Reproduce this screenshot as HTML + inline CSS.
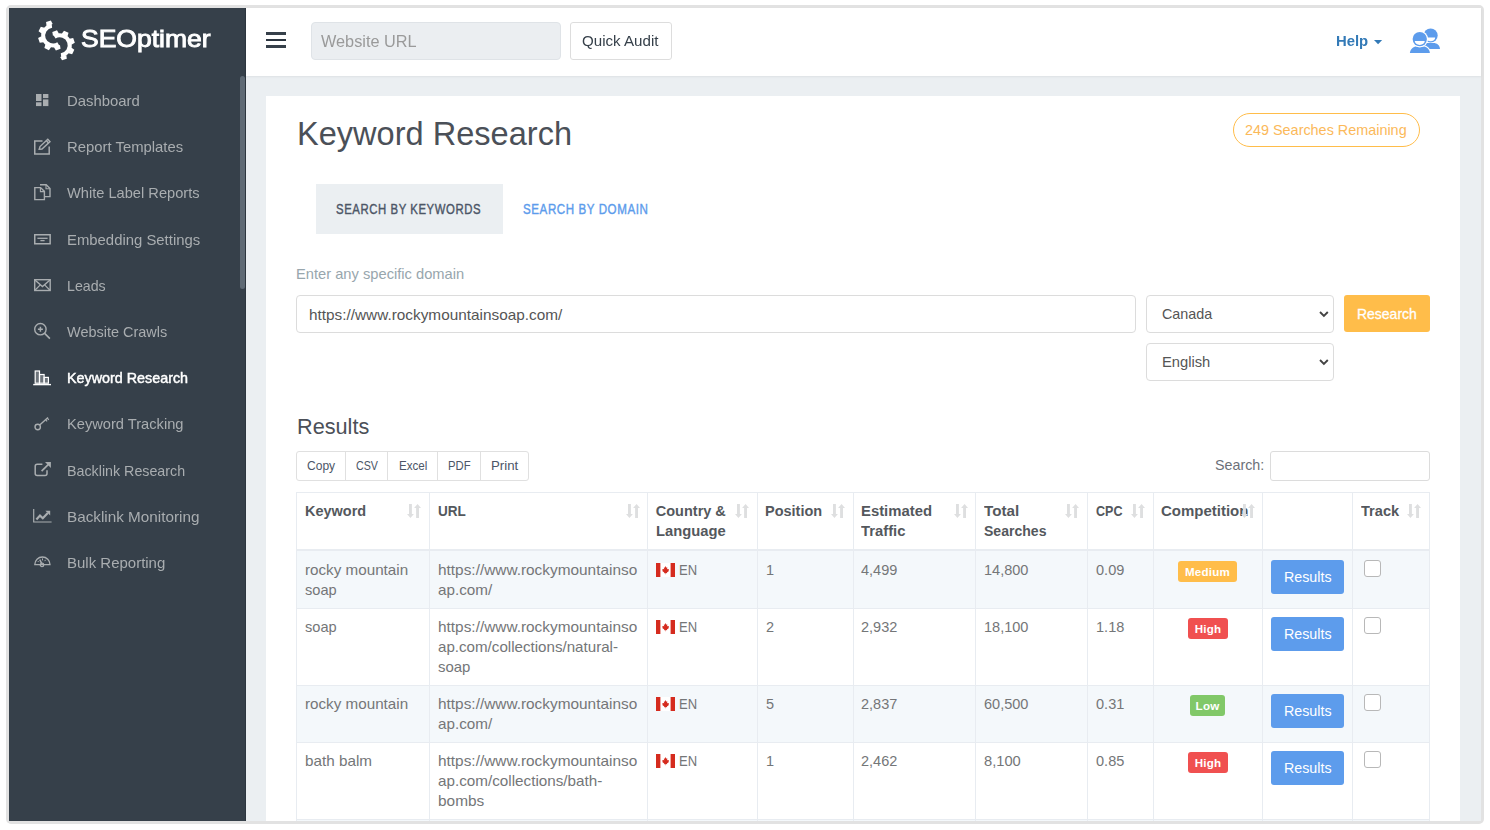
<!DOCTYPE html>
<html lang="en"><head><meta charset="utf-8"><title>Keyword Research - SEOptimer</title>
<style>
html,body{margin:0;padding:0;}
body{width:1490px;height:830px;background:#fff;position:relative;overflow:hidden;font-family:"Liberation Sans", sans-serif;}
#app{position:absolute;left:0;top:0;width:1490px;height:830px;}
#fixed{position:absolute;left:0;top:0;width:1490px;height:830px;will-change:transform;}
.b{position:absolute;box-sizing:border-box;}
.t{position:absolute;white-space:nowrap;transform-origin:0 50%;}
svg{position:absolute;overflow:visible;}
</style></head>
<body>
<div id="app">
<div class="b " style="left:6px;top:5px;width:1478px;height:819px;border:3px solid #e2e2e2;border-radius:5px;"></div>
<div class="b " style="left:9px;top:8px;width:237px;height:813px;background:#36404a;"></div>
<div class="b " style="left:245px;top:8px;width:1px;height:813px;background:#2d363f;"></div>
<div class="b " style="left:240px;top:76px;width:5px;height:213px;background:#5f6a75;border-radius:3px;"></div>
<div class="b " style="left:246px;top:76px;width:1235px;height:745px;background:#ebeff2;"></div>
<div class="b " style="left:246px;top:8px;width:1235px;height:68px;background:#fff;box-shadow:0 1px 2px rgba(0,0,0,0.06);"></div>
<div class="b " style="left:266px;top:96px;width:1194px;height:725px;background:#fff;"></div>
<div class="t " style="left:297.07px;top:113.02px;font-size:34px;line-height:40px;color:#4b5058;font-weight:normal;letter-spacing:0px;transform:scaleX(0.9575);">Keyword Research</div>
<div class="b " style="left:1233px;top:113px;width:187px;height:34px;border:1px solid #ffbd4a;border-radius:17px;"></div>
<div class="t " style="left:1245.28px;top:119.98px;font-size:14.5px;line-height:20px;color:#fbb95a;font-weight:normal;letter-spacing:0px;transform:scaleX(0.9927);">249 Searches Remaining</div>
<div class="b " style="left:316px;top:184px;width:187px;height:50px;background:#ebeff2;"></div>
<div class="t " style="left:335.93px;top:200.02px;font-size:13.8px;line-height:20px;color:#4c5667;font-weight:normal;letter-spacing:0.7px;-webkit-text-stroke:0.4px #4c5667;transform:scaleX(0.8227);">SEARCH BY KEYWORDS</div>
<div class="t " style="left:522.82px;top:200.02px;font-size:13.8px;line-height:20px;color:#5d9cec;font-weight:normal;letter-spacing:0.7px;-webkit-text-stroke:0.4px #5d9cec;transform:scaleX(0.8379);">SEARCH BY DOMAIN</div>
<div class="t " style="left:296.27px;top:263.78px;font-size:14.5px;line-height:20px;color:#98a6ad;font-weight:normal;letter-spacing:0px;transform:scaleX(1.0129);">Enter any specific domain</div>
<div class="b " style="left:296px;top:295px;width:840px;height:38px;border:1px solid #dcdcdc;border-radius:4px;background:#fff;"></div>
<div class="t " style="left:308.53px;top:305.38px;font-size:14.5px;line-height:20px;color:#555;font-weight:normal;letter-spacing:0px;transform:scaleX(1.058);">https://www.rockymountainsoap.com/</div>
<div class="b " style="left:1146px;top:295px;width:188px;height:38px;border:1px solid #dcdcdc;border-radius:4px;background:#fff;"></div>
<div class="t " style="left:1162.48px;top:304.38px;font-size:14.5px;line-height:20px;color:#555;font-weight:normal;letter-spacing:0px;transform:scaleX(0.9889);">Canada</div>
<svg style="left:1318.8px;top:311.2px" width="10" height="7" viewBox="0 0 10 7"><path d="M1 1L4.9 4.9L8.8 1" fill="none" stroke="#444" stroke-width="1.9"/></svg>
<div class="b " style="left:1146px;top:343px;width:188px;height:38px;border:1px solid #dcdcdc;border-radius:4px;background:#fff;"></div>
<div class="t " style="left:1162.46px;top:352.38px;font-size:14.5px;line-height:20px;color:#555;font-weight:normal;letter-spacing:0px;transform:scaleX(1.0149);">English</div>
<svg style="left:1318.8px;top:359.2px" width="10" height="7" viewBox="0 0 10 7"><path d="M1 1L4.9 4.9L8.8 1" fill="none" stroke="#444" stroke-width="1.9"/></svg>
<div class="b " style="left:1344px;top:295px;width:86px;height:37px;background:#ffbd4a;border-radius:3px;"></div>
<div class="t " style="left:1357.10px;top:304.38px;font-size:14.5px;line-height:20px;color:#fff;font-weight:normal;letter-spacing:0px;-webkit-text-stroke:0.3px #fff;transform:scaleX(0.9635);">Research</div>
<div class="t " style="left:296.72px;top:411.50px;font-size:22.5px;line-height:30px;color:#4b5058;font-weight:normal;letter-spacing:0px;transform:scaleX(0.9632);">Results</div>
<div class="b " style="left:296px;top:451px;width:233px;height:30px;border:1px solid #e0e0e0;border-radius:3px;background:#fff;"></div>
<div class="b " style="left:345px;top:452px;width:1px;height:28px;background:#e0e0e0;"></div>
<div class="b " style="left:387px;top:452px;width:1px;height:28px;background:#e0e0e0;"></div>
<div class="b " style="left:437px;top:452px;width:1px;height:28px;background:#e0e0e0;"></div>
<div class="b " style="left:480px;top:452px;width:1px;height:28px;background:#e0e0e0;"></div>
<div class="t " style="left:306.90px;top:455.86px;font-size:12.8px;line-height:20px;color:#4c5667;font-weight:normal;letter-spacing:0px;transform:scaleX(0.9407);">Copy</div>
<div class="t " style="left:355.97px;top:455.86px;font-size:12.8px;line-height:20px;color:#4c5667;font-weight:normal;letter-spacing:0px;transform:scaleX(0.8349);">CSV</div>
<div class="t " style="left:398.52px;top:455.86px;font-size:12.8px;line-height:20px;color:#4c5667;font-weight:normal;letter-spacing:0px;transform:scaleX(0.9062);">Excel</div>
<div class="t " style="left:447.93px;top:455.86px;font-size:12.8px;line-height:20px;color:#4c5667;font-weight:normal;letter-spacing:0px;transform:scaleX(0.8837);">PDF</div>
<div class="t " style="left:491.04px;top:455.86px;font-size:12.8px;line-height:20px;color:#4c5667;font-weight:normal;letter-spacing:0px;transform:scaleX(1.0347);">Print</div>
<div class="t " style="left:1215.19px;top:455.18px;font-size:14.5px;line-height:20px;color:#6c7179;font-weight:normal;letter-spacing:0px;transform:scaleX(0.9849);">Search:</div>
<div class="b " style="left:1270px;top:451px;width:160px;height:30px;border:1px solid #dcdcdc;border-radius:3px;background:#fff;"></div>
<div class="b " style="left:296px;top:551px;width:1134px;height:57px;background:#f4f8fb;"></div>
<div class="b " style="left:296px;top:685px;width:1134px;height:57px;background:#f4f8fb;"></div>
<div class="b " style="left:296px;top:820px;width:1134px;height:1px;background:#f4f8fb;"></div>
<div class="b " style="left:296px;top:492px;width:1134px;height:1px;background:#e8ecf1;"></div>
<div class="b " style="left:296px;top:608px;width:1134px;height:1px;background:#e8ecf1;"></div>
<div class="b " style="left:296px;top:685px;width:1134px;height:1px;background:#e8ecf1;"></div>
<div class="b " style="left:296px;top:742px;width:1134px;height:1px;background:#e8ecf1;"></div>
<div class="b " style="left:296px;top:819px;width:1134px;height:1px;background:#e8ecf1;"></div>
<div class="b " style="left:296px;top:549px;width:1134px;height:2px;background:#e8ecf1;"></div>
<div class="b " style="left:296px;top:492px;width:1px;height:329px;background:#e8ecf1;"></div>
<div class="b " style="left:429px;top:492px;width:1px;height:329px;background:#e8ecf1;"></div>
<div class="b " style="left:647px;top:492px;width:1px;height:329px;background:#e8ecf1;"></div>
<div class="b " style="left:757px;top:492px;width:1px;height:329px;background:#e8ecf1;"></div>
<div class="b " style="left:853px;top:492px;width:1px;height:329px;background:#e8ecf1;"></div>
<div class="b " style="left:975px;top:492px;width:1px;height:329px;background:#e8ecf1;"></div>
<div class="b " style="left:1087px;top:492px;width:1px;height:329px;background:#e8ecf1;"></div>
<div class="b " style="left:1153px;top:492px;width:1px;height:329px;background:#e8ecf1;"></div>
<div class="b " style="left:1262px;top:492px;width:1px;height:329px;background:#e8ecf1;"></div>
<div class="b " style="left:1352px;top:492px;width:1px;height:329px;background:#e8ecf1;"></div>
<div class="b " style="left:1429px;top:492px;width:1px;height:329px;background:#e8ecf1;"></div>
<div class="t th" style="left:304.78px;top:501.18px;font-size:14.5px;line-height:20px;color:#54585d;font-weight:bold;letter-spacing:0px;transform:scaleX(0.9983);">Keyword</div>
<div class="t th" style="left:437.72px;top:501.18px;font-size:14.5px;line-height:20px;color:#54585d;font-weight:bold;letter-spacing:0px;transform:scaleX(0.9343);">URL</div>
<div class="t th" style="left:655.77px;top:501.18px;font-size:14.5px;line-height:20px;color:#54585d;font-weight:bold;letter-spacing:0px;">Country &amp;</div>
<div class="t th" style="left:655.76px;top:521.28px;font-size:14.5px;line-height:20px;color:#54585d;font-weight:bold;letter-spacing:0px;transform:scaleX(1.0174);">Language</div>
<div class="t th" style="left:765.48px;top:501.18px;font-size:14.5px;line-height:20px;color:#54585d;font-weight:bold;letter-spacing:0px;transform:scaleX(0.999);">Position</div>
<div class="t th" style="left:861.06px;top:501.18px;font-size:14.5px;line-height:20px;color:#54585d;font-weight:bold;letter-spacing:0px;transform:scaleX(1.0241);">Estimated</div>
<div class="t th" style="left:861.06px;top:521.28px;font-size:14.5px;line-height:20px;color:#54585d;font-weight:bold;letter-spacing:0px;transform:scaleX(1.0222);">Traffic</div>
<div class="t th" style="left:983.84px;top:501.18px;font-size:14.5px;line-height:20px;color:#54585d;font-weight:bold;letter-spacing:0px;transform:scaleX(1.0463);">Total</div>
<div class="t th" style="left:983.90px;top:521.28px;font-size:14.5px;line-height:20px;color:#54585d;font-weight:bold;letter-spacing:0px;transform:scaleX(0.9691);">Searches</div>
<div class="t th" style="left:1095.77px;top:501.18px;font-size:14.5px;line-height:20px;color:#54585d;font-weight:bold;letter-spacing:0px;transform:scaleX(0.8638);">CPC</div>
<div class="t th" style="left:1161.35px;top:501.18px;font-size:14.5px;line-height:20px;color:#54585d;font-weight:bold;letter-spacing:0px;transform:scaleX(1.0333);">Competition</div>
<div class="t th" style="left:1361.17px;top:501.18px;font-size:14.5px;line-height:20px;color:#54585d;font-weight:bold;letter-spacing:0px;transform:scaleX(1.0067);">Track</div>
<svg style="left:407.3px;top:504px" width="14" height="14" viewBox="0 0 14 14"><g fill="#dedfe0"><path d="M2 0H4.9V10.1H6.9L3.45 14L0 10.1H2Z"/><path d="M9.1 14H12V3.9H14L10.55 0L7.1 3.9H9.1Z"/></g></svg>
<svg style="left:625.5px;top:504px" width="14" height="14" viewBox="0 0 14 14"><g fill="#dedfe0"><path d="M2 0H4.9V10.1H6.9L3.45 14L0 10.1H2Z"/><path d="M9.1 14H12V3.9H14L10.55 0L7.1 3.9H9.1Z"/></g></svg>
<svg style="left:735.3px;top:504px" width="14" height="14" viewBox="0 0 14 14"><g fill="#dedfe0"><path d="M2 0H4.9V10.1H6.9L3.45 14L0 10.1H2Z"/><path d="M9.1 14H12V3.9H14L10.55 0L7.1 3.9H9.1Z"/></g></svg>
<svg style="left:831.3px;top:504px" width="14" height="14" viewBox="0 0 14 14"><g fill="#dedfe0"><path d="M2 0H4.9V10.1H6.9L3.45 14L0 10.1H2Z"/><path d="M9.1 14H12V3.9H14L10.55 0L7.1 3.9H9.1Z"/></g></svg>
<svg style="left:953.5px;top:504px" width="14" height="14" viewBox="0 0 14 14"><g fill="#dedfe0"><path d="M2 0H4.9V10.1H6.9L3.45 14L0 10.1H2Z"/><path d="M9.1 14H12V3.9H14L10.55 0L7.1 3.9H9.1Z"/></g></svg>
<svg style="left:1065.3px;top:504px" width="14" height="14" viewBox="0 0 14 14"><g fill="#dedfe0"><path d="M2 0H4.9V10.1H6.9L3.45 14L0 10.1H2Z"/><path d="M9.1 14H12V3.9H14L10.55 0L7.1 3.9H9.1Z"/></g></svg>
<svg style="left:1131.3px;top:504px" width="14" height="14" viewBox="0 0 14 14"><g fill="#dedfe0"><path d="M2 0H4.9V10.1H6.9L3.45 14L0 10.1H2Z"/><path d="M9.1 14H12V3.9H14L10.55 0L7.1 3.9H9.1Z"/></g></svg>
<svg style="left:1241px;top:504px" width="14" height="14" viewBox="0 0 14 14"><g fill="#dedfe0"><path d="M2 0H4.9V10.1H6.9L3.45 14L0 10.1H2Z"/><path d="M9.1 14H12V3.9H14L10.55 0L7.1 3.9H9.1Z"/></g></svg>
<svg style="left:1407.3px;top:504px" width="14" height="14" viewBox="0 0 14 14"><g fill="#dedfe0"><path d="M2 0H4.9V10.1H6.9L3.45 14L0 10.1H2Z"/><path d="M9.1 14H12V3.9H14L10.55 0L7.1 3.9H9.1Z"/></g></svg>
<div class="t td" style="left:304.74px;top:559.58px;font-size:14.5px;line-height:20px;color:#747678;font-weight:normal;letter-spacing:0px;transform:scaleX(1.0487);">rocky mountain</div>
<div class="t td" style="left:304.77px;top:579.68px;font-size:14.5px;line-height:20px;color:#747678;font-weight:normal;letter-spacing:0px;transform:scaleX(1.0066);">soap</div>
<div class="t td" style="left:437.63px;top:559.58px;font-size:14.5px;line-height:20px;color:#747678;font-weight:normal;letter-spacing:0px;transform:scaleX(1.061);">https://www.rockymountainso</div>
<div class="t td" style="left:437.64px;top:579.68px;font-size:14.5px;line-height:20px;color:#747678;font-weight:normal;letter-spacing:0px;transform:scaleX(1.051);">ap.com/</div>
<svg style="left:656px;top:563px" width="19" height="14" viewBox="0 0 19 14"><rect width="19" height="14" fill="#fff"/><rect width="4.4" height="14" fill="#d52b1e"/><rect x="14.6" width="4.4" height="14" fill="#d52b1e"/><path transform="translate(9.6 7.0) scale(0.78 0.8) translate(-9.6 -7.3)" d="M9.6 2.4L10.6 4.4L11.8 3.9L11.4 6.6L12.6 5.6L12.9 6.5L14 6.3L13.4 8.2L13.9 8.6L11.3 10.4L11.6 11.3L9.9 11.1V12.6H9.3V11.1L7.6 11.3L7.9 10.4L5.3 8.6L5.8 8.2L5.2 6.3L6.3 6.5L6.6 5.6L7.8 6.6L7.4 3.9L8.6 4.4Z" fill="#d52b1e"/></svg>
<div class="t td" style="left:678.65px;top:559.58px;font-size:14.5px;line-height:20px;color:#747678;font-weight:normal;letter-spacing:0px;transform:scaleX(0.8981);">EN</div>
<div class="t td" style="left:766.00px;top:559.58px;font-size:14.5px;line-height:20px;color:#747678;font-weight:normal;letter-spacing:0px;">1</div>
<div class="t td" style="left:861.07px;top:559.58px;font-size:14.5px;line-height:20px;color:#747678;font-weight:normal;letter-spacing:0px;transform:scaleX(1.0015);">4,499</div>
<div class="t td" style="left:983.87px;top:559.58px;font-size:14.5px;line-height:20px;color:#747678;font-weight:normal;letter-spacing:0px;transform:scaleX(1.0021);">14,800</div>
<div class="t td" style="left:1095.67px;top:559.58px;font-size:14.5px;line-height:20px;color:#747678;font-weight:normal;letter-spacing:0px;transform:scaleX(1.0043);">0.09</div>
<div class="b " style="left:1178px;top:561px;width:59px;height:21px;background:#ffbd4a;border-radius:3px;"></div>
<div class="t" style="left:1178px;width:59px;text-align:center;top:561px;line-height:21px;font-size:11.6px;font-weight:bold;color:#fff;letter-spacing:0.2px;">Medium</div>
<div class="b " style="left:1271px;top:560px;width:73px;height:34px;background:#5d9cec;border-radius:3px;"></div>
<div class="t " style="left:1283.89px;top:567.38px;font-size:14.5px;line-height:20px;color:#fff;font-weight:normal;letter-spacing:0px;transform:scaleX(0.9827);">Results</div>
<div class="b " style="left:1364px;top:560px;width:17px;height:17px;background:#fff;border:1px solid #b8b8b8;border-radius:3px;"></div>
<div class="t td" style="left:304.77px;top:616.68px;font-size:14.5px;line-height:20px;color:#747678;font-weight:normal;letter-spacing:0px;transform:scaleX(1.0066);">soap</div>
<div class="t td" style="left:437.63px;top:616.68px;font-size:14.5px;line-height:20px;color:#747678;font-weight:normal;letter-spacing:0px;transform:scaleX(1.061);">https://www.rockymountainso</div>
<div class="t td" style="left:437.64px;top:636.78px;font-size:14.5px;line-height:20px;color:#747678;font-weight:normal;letter-spacing:0px;transform:scaleX(1.0436);">ap.com/collections/natural-</div>
<div class="t td" style="left:437.65px;top:656.88px;font-size:14.5px;line-height:20px;color:#747678;font-weight:normal;letter-spacing:0px;transform:scaleX(1.0299);">soap</div>
<svg style="left:656px;top:620px" width="19" height="14" viewBox="0 0 19 14"><rect width="19" height="14" fill="#fff"/><rect width="4.4" height="14" fill="#d52b1e"/><rect x="14.6" width="4.4" height="14" fill="#d52b1e"/><path transform="translate(9.6 7.0) scale(0.78 0.8) translate(-9.6 -7.3)" d="M9.6 2.4L10.6 4.4L11.8 3.9L11.4 6.6L12.6 5.6L12.9 6.5L14 6.3L13.4 8.2L13.9 8.6L11.3 10.4L11.6 11.3L9.9 11.1V12.6H9.3V11.1L7.6 11.3L7.9 10.4L5.3 8.6L5.8 8.2L5.2 6.3L6.3 6.5L6.6 5.6L7.8 6.6L7.4 3.9L8.6 4.4Z" fill="#d52b1e"/></svg>
<div class="t td" style="left:678.65px;top:616.68px;font-size:14.5px;line-height:20px;color:#747678;font-weight:normal;letter-spacing:0px;transform:scaleX(0.8981);">EN</div>
<div class="t td" style="left:766.00px;top:616.68px;font-size:14.5px;line-height:20px;color:#747678;font-weight:normal;letter-spacing:0px;">2</div>
<div class="t td" style="left:861.07px;top:616.68px;font-size:14.5px;line-height:20px;color:#747678;font-weight:normal;letter-spacing:0px;transform:scaleX(1.0015);">2,932</div>
<div class="t td" style="left:983.87px;top:616.68px;font-size:14.5px;line-height:20px;color:#747678;font-weight:normal;letter-spacing:0px;transform:scaleX(1.0021);">18,100</div>
<div class="t td" style="left:1095.67px;top:616.68px;font-size:14.5px;line-height:20px;color:#747678;font-weight:normal;letter-spacing:0px;transform:scaleX(1.0043);">1.18</div>
<div class="b " style="left:1188px;top:618px;width:40px;height:21px;background:#f05050;border-radius:3px;"></div>
<div class="t" style="left:1188px;width:40px;text-align:center;top:618px;line-height:21px;font-size:11.6px;font-weight:bold;color:#fff;letter-spacing:0.2px;">High</div>
<div class="b " style="left:1271px;top:617px;width:73px;height:34px;background:#5d9cec;border-radius:3px;"></div>
<div class="t " style="left:1283.89px;top:624.38px;font-size:14.5px;line-height:20px;color:#fff;font-weight:normal;letter-spacing:0px;transform:scaleX(0.9827);">Results</div>
<div class="b " style="left:1364px;top:617px;width:17px;height:17px;background:#fff;border:1px solid #b8b8b8;border-radius:3px;"></div>
<div class="t td" style="left:304.74px;top:693.58px;font-size:14.5px;line-height:20px;color:#747678;font-weight:normal;letter-spacing:0px;transform:scaleX(1.0487);">rocky mountain</div>
<div class="t td" style="left:437.63px;top:693.58px;font-size:14.5px;line-height:20px;color:#747678;font-weight:normal;letter-spacing:0px;transform:scaleX(1.061);">https://www.rockymountainso</div>
<div class="t td" style="left:437.64px;top:713.68px;font-size:14.5px;line-height:20px;color:#747678;font-weight:normal;letter-spacing:0px;transform:scaleX(1.051);">ap.com/</div>
<svg style="left:656px;top:697px" width="19" height="14" viewBox="0 0 19 14"><rect width="19" height="14" fill="#fff"/><rect width="4.4" height="14" fill="#d52b1e"/><rect x="14.6" width="4.4" height="14" fill="#d52b1e"/><path transform="translate(9.6 7.0) scale(0.78 0.8) translate(-9.6 -7.3)" d="M9.6 2.4L10.6 4.4L11.8 3.9L11.4 6.6L12.6 5.6L12.9 6.5L14 6.3L13.4 8.2L13.9 8.6L11.3 10.4L11.6 11.3L9.9 11.1V12.6H9.3V11.1L7.6 11.3L7.9 10.4L5.3 8.6L5.8 8.2L5.2 6.3L6.3 6.5L6.6 5.6L7.8 6.6L7.4 3.9L8.6 4.4Z" fill="#d52b1e"/></svg>
<div class="t td" style="left:678.65px;top:693.58px;font-size:14.5px;line-height:20px;color:#747678;font-weight:normal;letter-spacing:0px;transform:scaleX(0.8981);">EN</div>
<div class="t td" style="left:766.00px;top:693.58px;font-size:14.5px;line-height:20px;color:#747678;font-weight:normal;letter-spacing:0px;">5</div>
<div class="t td" style="left:861.07px;top:693.58px;font-size:14.5px;line-height:20px;color:#747678;font-weight:normal;letter-spacing:0px;transform:scaleX(1.0015);">2,837</div>
<div class="t td" style="left:983.87px;top:693.58px;font-size:14.5px;line-height:20px;color:#747678;font-weight:normal;letter-spacing:0px;transform:scaleX(1.0021);">60,500</div>
<div class="t td" style="left:1095.67px;top:693.58px;font-size:14.5px;line-height:20px;color:#747678;font-weight:normal;letter-spacing:0px;transform:scaleX(1.0043);">0.31</div>
<div class="b " style="left:1190px;top:695px;width:35px;height:21px;background:#81c868;border-radius:3px;"></div>
<div class="t" style="left:1190px;width:35px;text-align:center;top:695px;line-height:21px;font-size:11.6px;font-weight:bold;color:#fff;letter-spacing:0.2px;">Low</div>
<div class="b " style="left:1271px;top:694px;width:73px;height:34px;background:#5d9cec;border-radius:3px;"></div>
<div class="t " style="left:1283.89px;top:701.38px;font-size:14.5px;line-height:20px;color:#fff;font-weight:normal;letter-spacing:0px;transform:scaleX(0.9827);">Results</div>
<div class="b " style="left:1364px;top:694px;width:17px;height:17px;background:#fff;border:1px solid #b8b8b8;border-radius:3px;"></div>
<div class="t td" style="left:304.74px;top:750.58px;font-size:14.5px;line-height:20px;color:#747678;font-weight:normal;letter-spacing:0px;transform:scaleX(1.0524);">bath balm</div>
<div class="t td" style="left:437.63px;top:750.58px;font-size:14.5px;line-height:20px;color:#747678;font-weight:normal;letter-spacing:0px;transform:scaleX(1.061);">https://www.rockymountainso</div>
<div class="t td" style="left:437.64px;top:770.68px;font-size:14.5px;line-height:20px;color:#747678;font-weight:normal;letter-spacing:0px;transform:scaleX(1.0509);">ap.com/collections/bath-</div>
<div class="t td" style="left:437.63px;top:790.78px;font-size:14.5px;line-height:20px;color:#747678;font-weight:normal;letter-spacing:0px;transform:scaleX(1.0622);">bombs</div>
<svg style="left:656px;top:754px" width="19" height="14" viewBox="0 0 19 14"><rect width="19" height="14" fill="#fff"/><rect width="4.4" height="14" fill="#d52b1e"/><rect x="14.6" width="4.4" height="14" fill="#d52b1e"/><path transform="translate(9.6 7.0) scale(0.78 0.8) translate(-9.6 -7.3)" d="M9.6 2.4L10.6 4.4L11.8 3.9L11.4 6.6L12.6 5.6L12.9 6.5L14 6.3L13.4 8.2L13.9 8.6L11.3 10.4L11.6 11.3L9.9 11.1V12.6H9.3V11.1L7.6 11.3L7.9 10.4L5.3 8.6L5.8 8.2L5.2 6.3L6.3 6.5L6.6 5.6L7.8 6.6L7.4 3.9L8.6 4.4Z" fill="#d52b1e"/></svg>
<div class="t td" style="left:678.65px;top:750.58px;font-size:14.5px;line-height:20px;color:#747678;font-weight:normal;letter-spacing:0px;transform:scaleX(0.8981);">EN</div>
<div class="t td" style="left:766.00px;top:750.58px;font-size:14.5px;line-height:20px;color:#747678;font-weight:normal;letter-spacing:0px;">1</div>
<div class="t td" style="left:861.07px;top:750.58px;font-size:14.5px;line-height:20px;color:#747678;font-weight:normal;letter-spacing:0px;transform:scaleX(1.0015);">2,462</div>
<div class="t td" style="left:983.87px;top:750.58px;font-size:14.5px;line-height:20px;color:#747678;font-weight:normal;letter-spacing:0px;transform:scaleX(1.013);">8,100</div>
<div class="t td" style="left:1095.67px;top:750.58px;font-size:14.5px;line-height:20px;color:#747678;font-weight:normal;letter-spacing:0px;transform:scaleX(1.0043);">0.85</div>
<div class="b " style="left:1188px;top:752px;width:40px;height:21px;background:#f05050;border-radius:3px;"></div>
<div class="t" style="left:1188px;width:40px;text-align:center;top:752px;line-height:21px;font-size:11.6px;font-weight:bold;color:#fff;letter-spacing:0.2px;">High</div>
<div class="b " style="left:1271px;top:751px;width:73px;height:34px;background:#5d9cec;border-radius:3px;"></div>
<div class="t " style="left:1283.89px;top:758.38px;font-size:14.5px;line-height:20px;color:#fff;font-weight:normal;letter-spacing:0px;transform:scaleX(0.9827);">Results</div>
<div class="b " style="left:1364px;top:751px;width:17px;height:17px;background:#fff;border:1px solid #b8b8b8;border-radius:3px;"></div>
</div>
<div id="fixed">
<svg style="left:0;top:0" width="1490" height="830"><path d="M51.89 25.72 A9.95 9.95 0 1 0 58.37 44.04" fill="none" stroke="#fff" stroke-width="4.0"/><path d="M-3.2 -11.2L-2.5 -15.0H2.5L3.2 -11.2Z" fill="#fff" transform="translate(53.1 35.6) rotate(-18.0)"/><path d="M-3.2 -11.2L-2.5 -15.0H2.5L3.2 -11.2Z" fill="#fff" transform="translate(53.1 35.6) rotate(-63.5)"/><path d="M-3.2 -11.2L-2.5 -15.0H2.5L3.2 -11.2Z" fill="#fff" transform="translate(53.1 35.6) rotate(-109.0)"/><path d="M-3.2 -11.2L-2.5 -15.0H2.5L3.2 -11.2Z" fill="#fff" transform="translate(53.1 35.6) rotate(-154.5)"/><path d="M-3.2 -11.2L-2.5 -15.0H2.5L3.2 -11.2Z" fill="#fff" transform="translate(53.1 35.6) rotate(-200.0)"/><path d="M61.01 55.18 A9.95 9.95 0 1 0 54.53 36.86" fill="none" stroke="#fff" stroke-width="4.0"/><path d="M-3.2 -11.2L-2.5 -15.0H2.5L3.2 -11.2Z" fill="#fff" transform="translate(59.8 45.3) rotate(162.0)"/><path d="M-3.2 -11.2L-2.5 -15.0H2.5L3.2 -11.2Z" fill="#fff" transform="translate(59.8 45.3) rotate(116.5)"/><path d="M-3.2 -11.2L-2.5 -15.0H2.5L3.2 -11.2Z" fill="#fff" transform="translate(59.8 45.3) rotate(71.0)"/><path d="M-3.2 -11.2L-2.5 -15.0H2.5L3.2 -11.2Z" fill="#fff" transform="translate(59.8 45.3) rotate(25.5)"/><path d="M-3.2 -11.2L-2.5 -15.0H2.5L3.2 -11.2Z" fill="#fff" transform="translate(59.8 45.3) rotate(-20.0)"/></svg>
<div class="t " style="left:80.88px;top:23.65px;font-size:23.8px;line-height:30px;color:#fff;font-weight:normal;letter-spacing:0px;-webkit-text-stroke:0.9px #fff;transform:scaleX(1.1132);">SEOptimer</div>
<div class="t nav" style="left:66.66px;top:90.98px;font-size:14.5px;line-height:20px;color:#a9adb0;font-weight:normal;letter-spacing:0px;transform:scaleX(1.0261);">Dashboard</div>
<div class="t nav" style="left:66.66px;top:137.18px;font-size:14.5px;line-height:20px;color:#a9adb0;font-weight:normal;letter-spacing:0px;transform:scaleX(1.0248);">Report Templates</div>
<div class="t nav" style="left:66.67px;top:183.38px;font-size:14.5px;line-height:20px;color:#a9adb0;font-weight:normal;letter-spacing:0px;transform:scaleX(1.009);">White Label Reports</div>
<div class="t nav" style="left:66.66px;top:229.58px;font-size:14.5px;line-height:20px;color:#a9adb0;font-weight:normal;letter-spacing:0px;transform:scaleX(1.0263);">Embedding Settings</div>
<div class="t nav" style="left:66.69px;top:275.78px;font-size:14.5px;line-height:20px;color:#a9adb0;font-weight:normal;letter-spacing:0px;transform:scaleX(0.9773);">Leads</div>
<div class="t nav" style="left:66.68px;top:321.98px;font-size:14.5px;line-height:20px;color:#a9adb0;font-weight:normal;letter-spacing:0px;transform:scaleX(0.9979);">Website Crawls</div>
<div class="t nav" style="left:66.68px;top:368.18px;font-size:14.5px;line-height:20px;color:#fff;font-weight:normal;letter-spacing:0px;-webkit-text-stroke:0.45px #fff;transform:scaleX(0.988);">Keyword Research</div>
<div class="t nav" style="left:66.67px;top:414.38px;font-size:14.5px;line-height:20px;color:#a9adb0;font-weight:normal;letter-spacing:0px;transform:scaleX(1.0105);">Keyword Tracking</div>
<div class="t nav" style="left:66.69px;top:460.58px;font-size:14.5px;line-height:20px;color:#a9adb0;font-weight:normal;letter-spacing:0px;transform:scaleX(0.9837);">Backlink Research</div>
<div class="t nav" style="left:66.64px;top:506.78px;font-size:14.5px;line-height:20px;color:#a9adb0;font-weight:normal;letter-spacing:0px;transform:scaleX(1.0532);">Backlink Monitoring</div>
<div class="t nav" style="left:66.65px;top:552.98px;font-size:14.5px;line-height:20px;color:#a9adb0;font-weight:normal;letter-spacing:0px;transform:scaleX(1.0335);">Bulk Reporting</div>
<svg style="left:35.6px;top:93.9px" width="12.7" height="12.1" viewBox="0 0 12.7 12.1"><g fill="#a9adb0"><rect x="0" y="0" width="5.5" height="7"/><rect x="7" y="0" width="5.4" height="4.1"/><rect x="0" y="8.3" width="5.5" height="3.8"/><rect x="7" y="5.4" width="5.4" height="6.7"/></g></svg>
<svg style="left:33.9px;top:137.8px" width="17" height="17" viewBox="0 0 17 17"><g fill="none" stroke="#a9adb0" stroke-width="1.5"><path d="M8.5 3.1H0.75V15.9H15.2V8.4"/><path d="M5.2 11.2L6 8.6L13.8 1.2L16 3.6L8 11Z" stroke-width="1.4"/><path d="M12.3 2.6L14.5 5"/></g></svg>
<svg style="left:33.9px;top:183.9px" width="17" height="17" viewBox="0 0 17 17"><g fill="none" stroke="#a9adb0" stroke-width="1.4"><path d="M0.8 3.6H6.6L10.4 7.4V15.6H0.8Z"/><path d="M6.4 3.8V7.6H10.2" stroke-width="1.1"/><path d="M6 0.8H12.2L16 4.6V12.6H10.8"/><path d="M12 1V4.8H15.8" stroke-width="1.1"/></g></svg>
<svg style="left:33.9px;top:233.8px" width="17" height="11" viewBox="0 0 17 11"><g fill="none" stroke="#a9adb0"><rect x="0.75" y="0.75" width="15.4" height="9" stroke-width="1.5"/><path d="M3.4 4.3H13.6" stroke-width="1.3"/><path d="M6.4 6.6H10.6" stroke-width="1.3"/></g></svg>
<svg style="left:33.9px;top:279px" width="17" height="12.2" viewBox="0 0 17 12.2"><g fill="none" stroke="#a9adb0" stroke-width="1.4"><rect x="0.7" y="0.7" width="15.5" height="10.8"/><path d="M0.9 0.9L8.45 7.6L16 0.9"/><path d="M0.9 11.3L6.3 5.9M16 11.3L10.6 5.9" stroke-width="1.2"/></g></svg>
<svg style="left:33px;top:322px" width="20" height="20" viewBox="0 0 20 20"><g fill="none" stroke="#a9adb0" stroke-width="1.4"><circle cx="7.4" cy="7.2" r="5.7"/><path d="M11.6 11.4L16.9 16.6" stroke-width="1.6"/><path d="M4.9 7.2H9.9M7.4 4.7V9.7" stroke-width="1.5"/></g></svg>
<svg style="left:33px;top:369px" width="19" height="17" viewBox="0 0 19 17"><g fill="rgba(255,255,255,0.28)" stroke="#fff" stroke-width="1.2"><path d="M0.2 15.6H18" stroke-width="1.4"/><rect x="2.2" y="2" width="4.3" height="12.2"/><rect x="6.5" y="5.5" width="4.6" height="8.7"/><rect x="11.1" y="8.4" width="4.3" height="5.8"/></g></svg>
<svg style="left:33px;top:415px" width="18" height="16" viewBox="0 0 18 16"><g fill="none" stroke="#a9adb0" stroke-width="1.4"><circle cx="4.7" cy="12" r="2.7"/><path d="M6.7 10.1L15 2.6"/><path d="M12.6 4.7L14.1 6.4M14.3 3.2L15.8 4.9" stroke-width="1.2"/></g></svg>
<svg style="left:33.5px;top:461px" width="18" height="16" viewBox="0 0 18 16"><g fill="none" stroke="#a9adb0" stroke-width="1.5"><path d="M8.4 3.2H3.2Q1.2 3.2 1.2 5.2V12.6Q1.2 14.6 3.2 14.6H11Q13 14.6 13 12.6V9.2"/><path d="M7.6 10.2L15.2 2.6" stroke-width="1.7"/><path d="M11 1.1H16.9V7Z" fill="#a9adb0" stroke="none"/></g></svg>
<svg style="left:32.6px;top:508px" width="19" height="15" viewBox="0 0 19 15"><g fill="none" stroke="#a9adb0" stroke-width="1.4"><path d="M0.7 1V14H18.6" stroke-width="1.2"/><path d="M3.4 11.6L7 7.6L9.8 10.2L14.8 5" stroke-width="2.2"/><path d="M12.4 2.8H17.2V7.6Z" fill="#a9adb0" stroke="none"/></g></svg>
<svg style="left:33.5px;top:556px" width="18" height="12" viewBox="0 0 18 12"><g fill="none" stroke="#a9adb0" stroke-width="1.3"><path d="M0.8 8.6A7.6 7.6 0 0 1 16 8.6Z"/><circle cx="8" cy="8.9" r="1.7"/><path d="M7.6 7.4L5.8 3.6" stroke-width="1.5"/><path d="M8.5 2.4V4.4M11.6 3.8L10.7 5.1M3.8 5.1L4.8 6.1" stroke-width="1"/></g></svg>
<div class="b " style="left:266px;top:32px;width:20px;height:3px;background:#36404a;"></div>
<div class="b " style="left:266px;top:39px;width:20px;height:2px;background:#2b3540;"></div>
<div class="b " style="left:266px;top:45px;width:20px;height:3px;background:#36404a;"></div>
<div class="b " style="left:311px;top:22px;width:250px;height:38px;background:#ebeef1;border:1px solid #dfe3e7;border-radius:4px;"></div>
<div class="t " style="left:320.99px;top:29.81px;font-size:17px;line-height:24px;color:#9a9a9a;font-weight:normal;letter-spacing:0px;transform:scaleX(0.9568);">Website URL</div>
<div class="b " style="left:570px;top:22px;width:102px;height:38px;background:#fff;border:1px solid #ddd;border-radius:3px;"></div>
<div class="t " style="left:582.44px;top:30.98px;font-size:14.5px;line-height:20px;color:#36404a;font-weight:normal;letter-spacing:0px;transform:scaleX(1.0432);">Quick Audit</div>
<div class="t " style="left:1336.26px;top:31.18px;font-size:14.5px;line-height:20px;color:#337ab7;font-weight:bold;letter-spacing:0px;transform:scaleX(1.0243);">Help</div>
<svg style="left:1373.8px;top:39.6px" width="8.2" height="4.2" viewBox="0 0 8.2 4.2"><path d="M0 0H8.2L4.1 4.2Z" fill="#337ab7"/></svg>
<svg style="left:1400px;top:20px" width="50" height="40" viewBox="0 0 50 40"><g fill="#5d9cec">
<path d="M21.2 28.9C21.6 25.2 24.6 23.1 27.4 23.1H33.8C36.6 23.1 39.6 25.2 40 28.9Z"/>
<circle cx="30.6" cy="15.5" r="7.1"/></g>
<path d="M26 17.6H35.2A4.6 3.6 0 0 1 26 17.6Z" fill="#fff"/>
<path d="M9.9 33C10.3 29.2 13.4 26.6 16.4 26.6H23.4C26.4 26.6 29.5 29.2 29.9 33Z" fill="#fff" stroke="#fff" stroke-width="2.6"/>
<path d="M9.9 33C10.3 29.2 13.4 26.6 16.4 26.6H23.4C26.4 26.6 29.5 29.2 29.9 33Z" fill="#5d9cec"/>
<rect x="8" y="33" width="24" height="3" fill="#fff"/>
<circle cx="19.76" cy="19.1" r="8.4" fill="#fff"/>
<circle cx="19.76" cy="19.1" r="7.15" fill="#5d9cec"/>
<path d="M14.76 21H24.76A5 3.9 0 0 1 14.76 21Z" fill="#fff"/></svg>
</div>
</body></html>
